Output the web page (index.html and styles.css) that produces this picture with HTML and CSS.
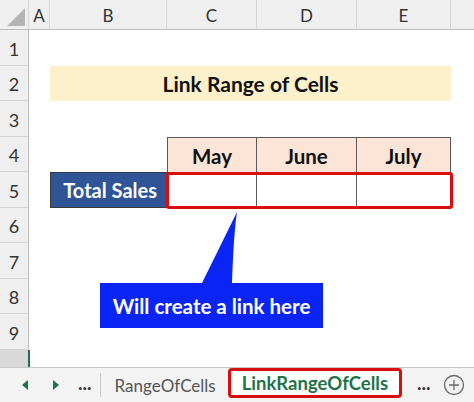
FILE: index.html
```html
<!DOCTYPE html>
<html>
<head>
<meta charset="utf-8">
<link rel="stylesheet" href="styles.css">
</head>
<body>
<div class="app">
  <div class="sheet">
    <div class="corner"><span class="tri"></span></div>
    <div class="ch">A</div>
    <div class="ch">B</div>
    <div class="ch">C</div>
    <div class="ch">D</div>
    <div class="ch">E</div>
    <div class="ch last"></div>

    <div class="rh r1">1</div>
    <div class="rh r2">2</div>
    <div class="rh r3">3</div>
    <div class="rh r4">4</div>
    <div class="rh r5">5</div>
    <div class="rh r6">6</div>
    <div class="rh r7">7</div>
    <div class="rh r8">8</div>
    <div class="rh r9">9</div>
    <div class="rh r10"></div>
    <div class="greenline"></div>

    <div class="title">Link Range of Cells</div>

    <div class="hd c">May</div>
    <div class="hd d">June</div>
    <div class="hd e">July</div>

    <div class="label">Total Sales</div>
    <div class="val c"></div>
    <div class="val d"></div>
    <div class="val e"></div>
    <div class="redbox"></div>

    <div class="callout">
      <svg class="pointer" width="40" height="72" viewBox="0 0 40 72">
        <path d="M37 0 L2 71 L32 71 C33 45 34 20 37 0 Z" fill="#0a24f5"/>
      </svg>
      <div class="callbox">Will create a link here</div>
    </div>
  </div>

  <div class="tabs">
    <span class="nav">
      <svg width="8" height="10" viewBox="0 0 8 10"><path d="M7 0 L1 5 L7 10 Z" fill="#217346"/></svg>
    </span>
    <span class="nav nav2">
      <svg width="8" height="10" viewBox="0 0 8 10"><path d="M1 0 L7 5 L1 10 Z" fill="#217346"/></svg>
    </span>
    <span class="dots">...</span>
    <span class="sep"></span>
    <span class="tab">RangeOfCells</span>
    <span class="tab active">LinkRangeOfCells</span>
    <span class="dots dots2">...</span>
    <span class="plus">
      <svg width="22" height="22" viewBox="0 0 22 22"><circle cx="11" cy="11" r="9.5" fill="none" stroke="#6a6a6a" stroke-width="1.3"/><path d="M11 6 V16 M6 11 H16" stroke="#6a6a6a" stroke-width="1.3"/></svg>
    </span>
  </div>
</div>
</body>
</html>
```
FILE: styles.css
```css
html, body {
  margin: 0;
  padding: 0;
  background: #ffffff;
  overflow: hidden;
}
.app {
  width: 474px;
  height: 402px;
  display: flex;
  flex-direction: column;
  font-family: Lato, "Open Sans", sans-serif;
}
.sheet {
  position: relative;
  display: grid;
  grid-template-columns: 29px 21px 117px 90px 100px 94px 23px;
  grid-template-rows: 30px repeat(9, 35.5px) 17.5px;
  height: 367px;
}
.corner {
  grid-column: 1;
  grid-row: 1;
  background: #efefef;
  border-right: 1px solid #d4d4d4;
  border-bottom: 1px solid #bdbdbd;
  position: relative;
}
.tri {
  position: absolute;
  right: 3px;
  bottom: 3px;
  width: 0;
  height: 0;
  border-left: 18px solid transparent;
  border-bottom: 18px solid #b4b4b4;
}
.ch {
  grid-row: 1;
  background: #efefef;
  border-right: 1px solid #d4d4d4;
  border-bottom: 1px solid #bdbdbd;
  display: flex;
  align-items: center;
  justify-content: center;
  font-size: 17px;
  color: #333;
  padding-top: 2px;
}
.ch.last { border-right: none; }
.rh {
  grid-column: 1;
  background: #efefef;
  border-right: 1px solid #bdbdbd;
  border-bottom: 1px solid #d4d4d4;
  display: flex;
  align-items: center;
  justify-content: center;
  font-size: 18px;
  color: #333;
  padding-top: 3px;
  box-sizing: border-box;
}
.r1 { grid-row: 2; }
.r2 { grid-row: 3; }
.r3 { grid-row: 4; }
.r4 { grid-row: 5; }
.r5 { grid-row: 6; }
.r6 { grid-row: 7; }
.r7 { grid-row: 8; }
.r8 { grid-row: 9; }
.r9 { grid-row: 10; }
.r10 { grid-row: 11; background: #d9d9d9; border-bottom: none; }
.greenline {
  grid-column: 2;
  grid-row: 11;
  border-left: 2px solid #217346;
  margin-left: -1px;
}
.title {
  grid-column: 3 / 7;
  grid-row: 3;
  background: #fdf1cc;
  display: flex;
  align-items: center;
  justify-content: center;
  font-weight: 700;
  font-size: 21px;
  color: #111;
  padding-top: 1px;
}
.hd {
  grid-row: 5;
  background: #fce4d6;
  border: 1px solid #5a5a5a;
  border-bottom: none;
  border-left: none;
  display: flex;
  align-items: center;
  justify-content: center;
  font-weight: 700;
  font-size: 20.5px;
  color: #111;
  padding-top: 2px;
}
.hd.c { border-left: 1px solid #5a5a5a; }
.c { grid-column: 4; }
.d { grid-column: 5; }
.e { grid-column: 6; }
.label {
  grid-column: 3;
  grid-row: 6;
  background: #2f5597;
  border: 1px solid #3a3a3a;
  color: #fff;
  font-weight: 700;
  font-size: 20px;
  display: flex;
  align-items: center;
  justify-content: flex-end;
  padding-right: 9px;
  padding-top: 1px;
}
.val {
  grid-row: 6;
  border-top: 1px solid #5a5a5a;
  border-right: 1px solid #5a5a5a;
  border-bottom: 1px solid #5a5a5a;
}
.redbox {
  grid-column: 4 / 7;
  grid-row: 6;
  border: 3px solid #d90d0d;
  border-radius: 3px;
  margin: 0 -2px -1px -1px;
}
.callout {
  position: absolute;
  left: 100px;
  top: 212px;
  width: 223px;
}
.pointer {
  display: block;
  margin-left: 100px;
  margin-bottom: -1px;
}
.callbox {
  background: #0a24f5;
  color: #fff;
  font-weight: 700;
  font-size: 20.5px;
  height: 45px;
  display: flex;
  align-items: center;
  justify-content: center;
}
.tabs {
  height: 35px;
  background: #f3f3f3;
  border-top: 1px solid #c6c6c6;
  display: flex;
  align-items: center;
  box-sizing: border-box;
}
.nav {
  display: flex;
  margin-left: 21px;
}
.nav2 { margin-left: 23px; }
.dots {
  margin-left: 18px;
  font-weight: 700;
  font-size: 19px;
  color: #333;
  margin-top: -6px;
}
.sep {
  width: 1px;
  height: 24px;
  background: #c8c8c8;
  margin-left: 8px;
}
.tab {
  font-size: 17px;
  color: #555;
  margin-left: 14px;
}
.tab.active {
  margin-left: 12px;
  color: #217346;
  font-weight: 700;
  font-size: 18.5px;
  background: #fff;
  border: 3px solid #d90d0d;
  border-radius: 4px;
  height: 30px;
  box-sizing: border-box;
  display: flex;
  align-items: center;
  padding: 0 11px;
  margin-top: -5px;
}
.dots2 { margin-left: 15px; }
.plus {
  display: flex;
  margin-left: 12px;
}
```
